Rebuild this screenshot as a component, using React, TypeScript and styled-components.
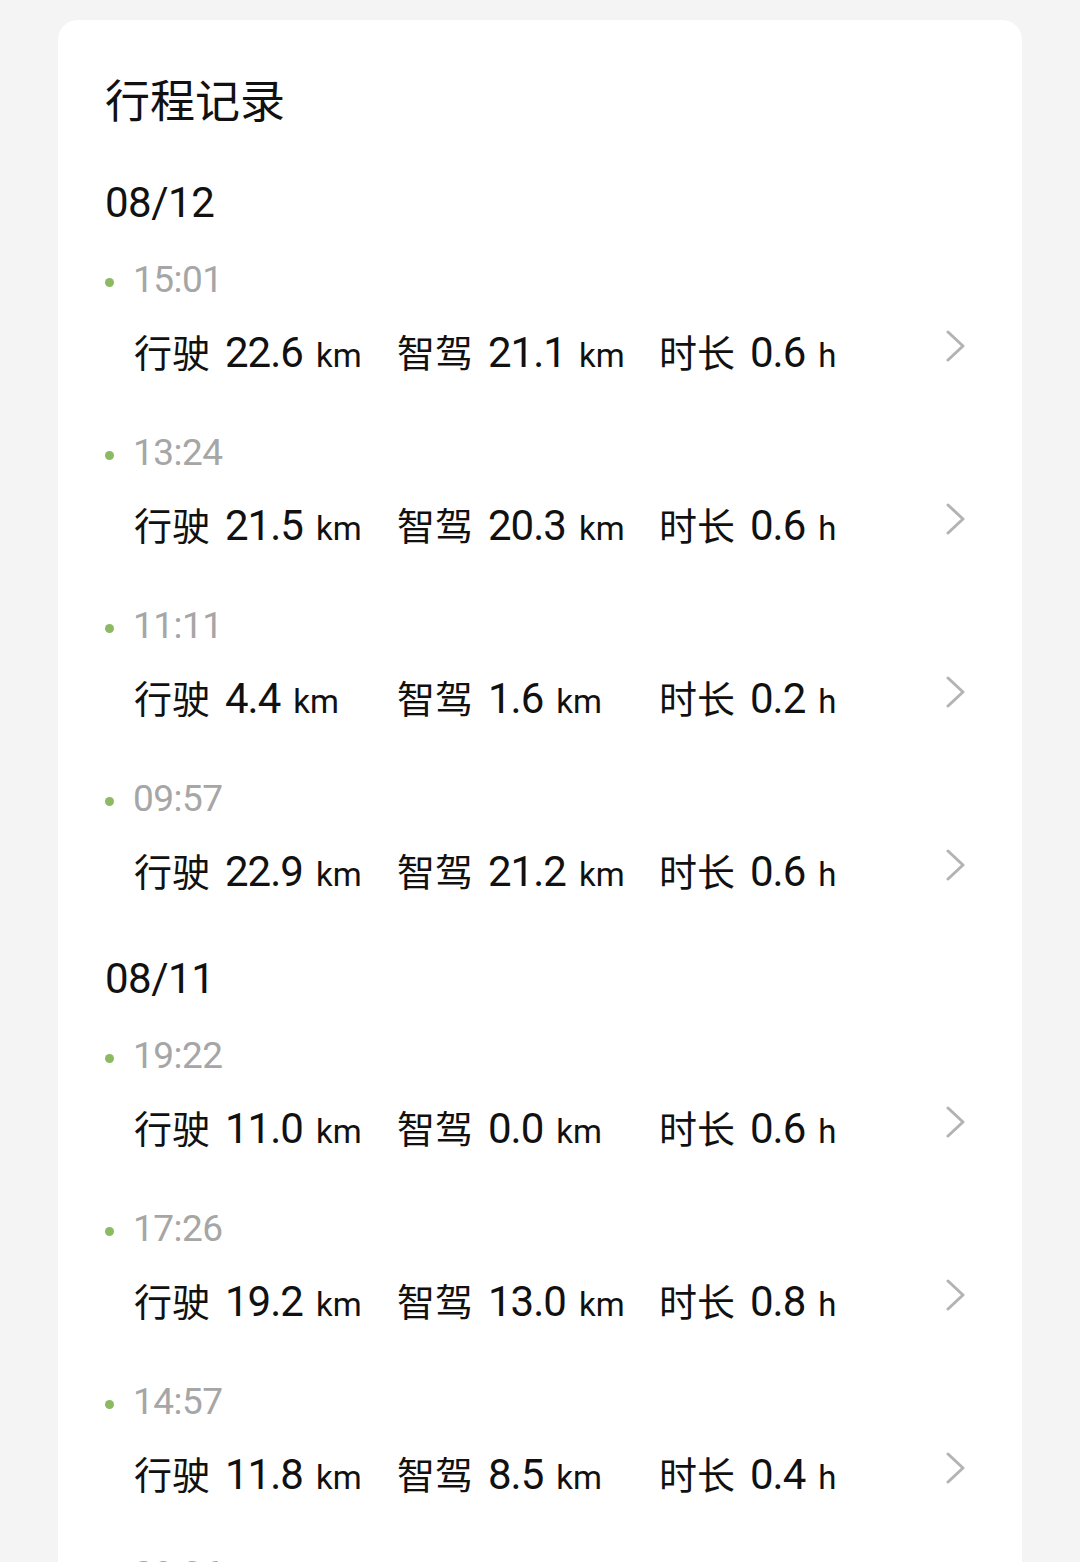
import React from 'react';
import styled, { createGlobalStyle } from 'styled-components';

const GlobalStyle = createGlobalStyle`
  html, body {
    margin: 0;
    padding: 0;
    background: #f4f4f4;
  }
  body {
    font-family: Roboto, "Noto Sans CJK SC", sans-serif;
    color: #111;
  }
`;

type Trip = { time: string; drive: string; smart: string; hours: string };
type Day = { date: string; trips: Trip[] };

const days: Day[] = [
  {
    date: '08/12',
    trips: [
      { time: '15:01', drive: '22.6', smart: '21.1', hours: '0.6' },
      { time: '13:24', drive: '21.5', smart: '20.3', hours: '0.6' },
      { time: '11:11', drive: '4.4', smart: '1.6', hours: '0.2' },
      { time: '09:57', drive: '22.9', smart: '21.2', hours: '0.6' },
    ],
  },
  {
    date: '08/11',
    trips: [
      { time: '19:22', drive: '11.0', smart: '0.0', hours: '0.6' },
      { time: '17:26', drive: '19.2', smart: '13.0', hours: '0.8' },
      { time: '14:57', drive: '11.8', smart: '8.5', hours: '0.4' },
      { time: '09:36', drive: '10.3', smart: '7.9', hours: '0.5' },
    ],
  },
];

const Page = styled.div`
  height: 1562px;
  overflow: hidden;
  padding: 20px 58px 0;
  box-sizing: border-box;
`;

const Card = styled.div`
  background: #fff;
  border-radius: 20px;
  padding: 49px 47px 40px;
  min-height: 1600px;
  box-sizing: border-box;
`;

const Title = styled.h1`
  margin: 0 0 46px;
  font-size: 45px;
  line-height: 60px;
  font-weight: 400;
  font-family: "Noto Sans CJK SC", sans-serif;
`;

const DaySection = styled.section`
  & + & {
    margin-top: 4px;
  }
`;

const DateLabel = styled.div`
  font-size: 42px;
  line-height: 56px;
  margin-bottom: 24px;
  letter-spacing: -0.5px;
`;

const TripBlock = styled.div`
  padding-bottom: 48px;
`;

const TimeRow = styled.div`
  display: flex;
  align-items: center;
  height: 48px;
  color: #a6a6a6;
  font-size: 37px;
  letter-spacing: -0.5px;
`;

const Dot = styled.span`
  width: 9px;
  height: 9px;
  border-radius: 50%;
  background: #8cba62;
  margin: 6px 19px 0 0;
  flex: none;
`;

const DataRow = styled.div`
  display: grid;
  grid-template-columns: 263px 262px 1fr 30px;
  align-items: center;
  height: 60px;
  margin-top: 17px;
  padding-left: 29px;
`;

const Stat = styled.div`
  display: flex;
  align-items: baseline;
  white-space: nowrap;
`;

const Label = styled.span`
  font-family: "Noto Sans CJK SC", sans-serif;
  font-size: 38px;
  margin-right: 15px;
`;

const Value = styled.span`
  font-size: 42px;
  letter-spacing: -1px;
`;

const Unit = styled.span`
  font-size: 33px;
  margin-left: 13px;
`;

const Chevron = () => (
  <svg width="22" height="32" viewBox="0 0 22 32" style={{ marginTop: -8 }}>
    <polyline points="3,2 18,16 3,30" fill="none" stroke="#b3b3b3" strokeWidth="3" strokeLinecap="round" strokeLinejoin="round" />
  </svg>
);

const StatItem: React.FC<{ label: string; value: string; unit: string }> = ({ label, value, unit }) => (
  <Stat>
    <Label>{label}</Label>
    <Value>{value}</Value>
    <Unit>{unit}</Unit>
  </Stat>
);

const App: React.FC = () => (
  <Page>
    <GlobalStyle />
    <Card>
      <Title>行程记录</Title>
      {days.map((day) => (
        <DaySection key={day.date}>
          <DateLabel>{day.date}</DateLabel>
          {day.trips.map((trip) => (
            <TripBlock key={trip.time}>
              <TimeRow>
                <Dot />
                {trip.time}
              </TimeRow>
              <DataRow>
                <StatItem label="行驶" value={trip.drive} unit="km" />
                <StatItem label="智驾" value={trip.smart} unit="km" />
                <StatItem label="时长" value={trip.hours} unit="h" />
                <Chevron />
              </DataRow>
            </TripBlock>
          ))}
        </DaySection>
      ))}
    </Card>
  </Page>
);

export default App;
